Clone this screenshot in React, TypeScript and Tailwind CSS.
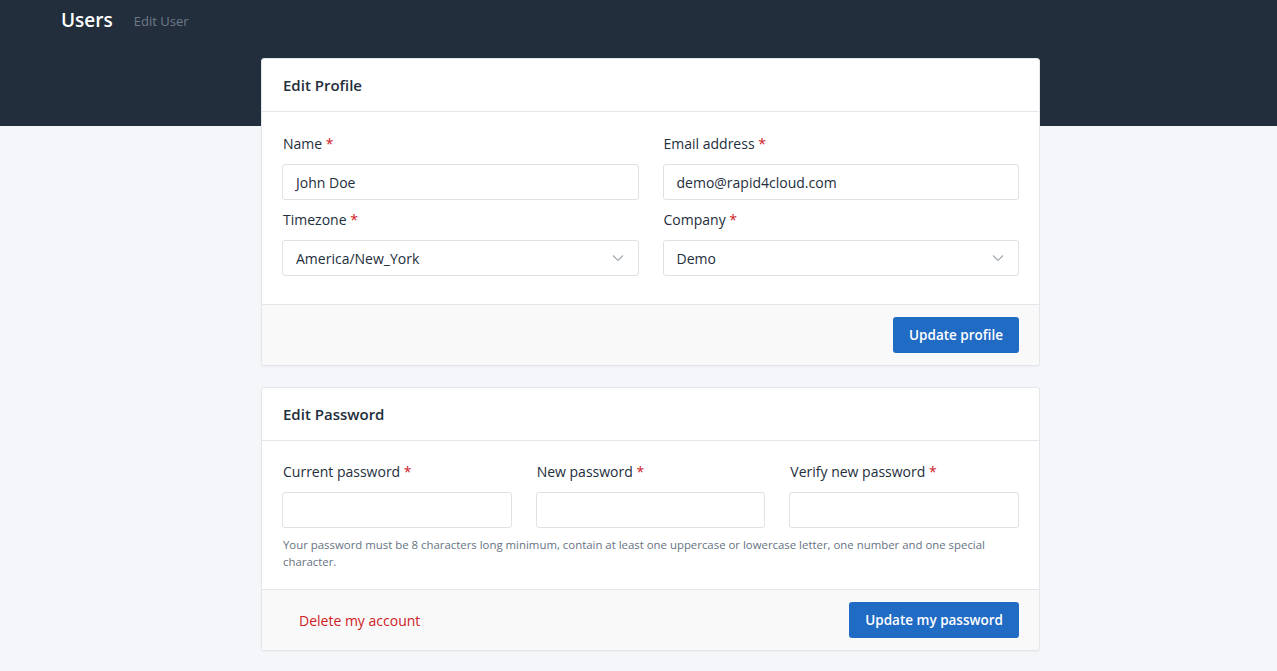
import { ReactNode } from "react";

const font = { fontFamily: "'Open Sans', 'Noto Sans', sans-serif" };

function Label({ children }: { children: ReactNode }) {
  return (
    <label className="block text-[14px] leading-5 mb-[10px] pl-px text-[#232e3c]">
      {children} <span className="text-[#cd201f]">*</span>
    </label>
  );
}

function TextInput({ value }: { value?: string }) {
  return (
    <div className="h-[36px] w-full rounded-[3px] border border-[#dfe1e4] bg-white px-[13px] flex items-center text-[14px] text-[#232e3c]">
      {value}
    </div>
  );
}

function SelectInput({ value }: { value: string }) {
  return (
    <div className="h-[36px] w-full rounded-[3px] border border-[#dfe1e4] bg-white pl-[13px] pr-[14px] flex items-center justify-between text-[14px] text-[#232e3c]">
      <span>{value}</span>
      <svg width="12" height="8" viewBox="0 0 12 8" fill="none">
        <path d="M1 1.5l5 5 5-5" stroke="#a5abb3" strokeWidth="1.2" />
      </svg>
    </div>
  );
}

function Card({ title, children }: { title: string; children: ReactNode }) {
  return (
    <div className="w-[779px] rounded-[3px] border border-[#e3e6ea] bg-white shadow-[0_1px_2px_rgba(0,0,0,0.04)]">
      <div className="h-[53px] px-[21px] flex items-center border-b border-[#e3e6ea] text-[15px] font-semibold text-[#232e3c]">
        {title}
      </div>
      {children}
    </div>
  );
}

function PrimaryButton({ children }: { children: ReactNode }) {
  return (
    <button className="h-[36px] px-[16px] rounded-[3px] bg-[#206bc4] text-white text-[13.5px] font-semibold">
      {children}
    </button>
  );
}

export default function App() {
  return (
    <div className="min-h-[671px] bg-[#f4f6fa]" style={font}>
      <div className="h-[126px] bg-[#232e3c] pl-[61px] pt-[6px] flex items-start gap-[21px]">
        <span className="text-[19px] leading-7 text-white font-semibold">Users</span>
        <span className="text-[13px] leading-7 mt-[1px] text-[#6e7a89]">Edit User</span>
      </div>

      <div className="-mt-[68px] pl-[261px] pb-[19px] flex flex-col gap-[21px]">
        <Card title="Edit Profile">
          <div className="px-[20px] pt-[22px] pb-[28px] grid grid-cols-2 gap-x-[24px] gap-y-[10px]">
            <div>
              <Label>Name</Label>
              <TextInput value="John Doe" />
            </div>
            <div>
              <Label>Email address</Label>
              <TextInput value="demo@rapid4cloud.com" />
            </div>
            <div>
              <Label>Timezone</Label>
              <SelectInput value="America/New_York" />
            </div>
            <div>
              <Label>Company</Label>
              <SelectInput value="Demo" />
            </div>
          </div>
          <div className="border-t border-[#e3e6ea] bg-[#f9f9f9] px-[20px] pt-[12px] pb-[12px] flex justify-end rounded-b-[3px]">
            <PrimaryButton>Update profile</PrimaryButton>
          </div>
        </Card>

        <Card title="Edit Password">
          <div className="px-[20px] pt-[21px] pb-[19px]">
            <div className="grid grid-cols-3 gap-x-[24px]">
              <div>
                <Label>Current password</Label>
                <TextInput />
              </div>
              <div>
                <Label>New password</Label>
                <TextInput />
              </div>
              <div>
                <Label>Verify new password</Label>
                <TextInput />
              </div>
            </div>
            <p className="mt-[8px] pl-px text-[11.4px] leading-[17px] text-[#667382] pr-[20px]">
              Your password must be 8 characters long minimum, contain at least one uppercase or lowercase letter, one number and one special character.
            </p>
          </div>
          <div className="border-t border-[#e3e6ea] bg-[#f9f9f9] px-[20px] pt-[12px] pb-[12px] flex items-center justify-between rounded-b-[3px]">
            <button className="h-[36px] px-[17px] text-[14px] text-[#cd201f]">Delete my account</button>
            <PrimaryButton>Update my password</PrimaryButton>
          </div>
        </Card>
      </div>
    </div>
  );
}
